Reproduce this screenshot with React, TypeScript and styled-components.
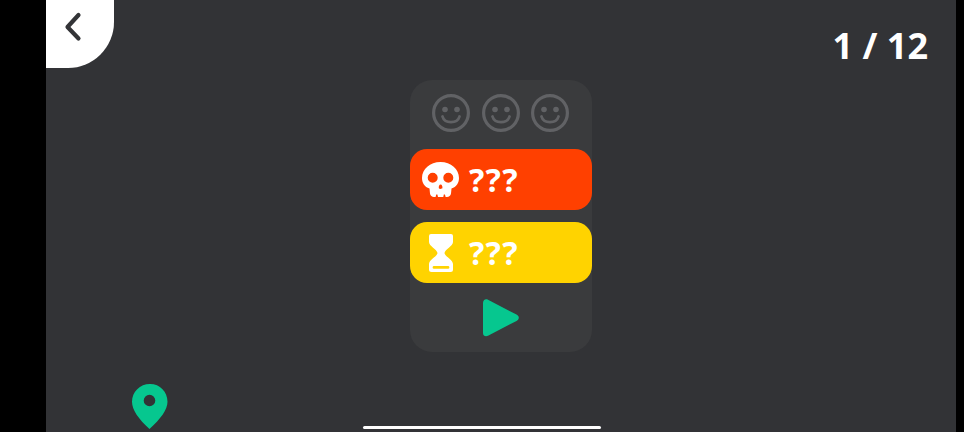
import React, { FC, ReactNode } from 'react'
import styled, { createGlobalStyle } from 'styled-components'

const GlobalStyle = createGlobalStyle`
  html, body {
    margin: 0;
    padding: 0;
    background: #000;
    font-family: "Noto Sans", "Open Sans", sans-serif;
  }
`

const Frame = styled.div`
  width: 964px;
  height: 432px;
  overflow: hidden;
  background: #000;
  display: flex;
  justify-content: flex-start;
  padding-left: 46px;
  box-sizing: border-box;
`

const Screen = styled.main`
  position: relative;
  width: 910px;
  height: 432px;
  background: #323336;
  display: flex;
  justify-content: center;
  align-items: flex-start;
  padding-top: 80px;
  box-sizing: border-box;
`

const BackButton = styled.button`
  position: absolute;
  left: 0;
  top: 0;
  width: 68px;
  height: 68px;
  padding: 0 15px 14px 0;
  border: 0;
  background: #fff;
  border-bottom-right-radius: 46px;
  display: flex;
  align-items: center;
  justify-content: center;
`

const Counter = styled.div`
  position: absolute;
  right: 28px;
  top: 22px;
  color: #fff;
  font-size: 36px;
  line-height: 48px;
  font-weight: 700;
  white-space: pre;
`

const Card = styled.section`
  width: 182px;
  height: 272px;
  background: #3a3b3d;
  border-radius: 22px;
  display: flex;
  flex-direction: column;
`

const Faces = styled.div`
  height: 66px;
  padding: 0 1px 3px 0;
  display: flex;
  align-items: center;
  justify-content: center;
  gap: 11.5px;
`

const Row = styled.div<{ $color: string }>`
  height: 61px;
  background: ${p => p.$color};
  border-radius: 17px;
  display: flex;
  align-items: center;
  padding-left: 12px;
  gap: 10px;
  color: #fff;
  font-size: 32px;
  font-weight: 700;
  letter-spacing: 1.3px;
`

const RowGap = styled.div`
  height: 12px;
`

const PlayRow = styled.div`
  height: 68px;
  padding-top: 1px;
  display: flex;
  align-items: center;
  justify-content: center;
`

const IconSlot = styled.span`
  width: 37px;
  display: flex;
  justify-content: center;
`

const Pin = styled.svg`
  position: absolute;
  left: 86px;
  top: 384px;
`

const HomeBar = styled.div`
  position: absolute;
  left: 317px;
  bottom: 3px;
  width: 238px;
  height: 3px;
  border-radius: 2px;
  background: #fff;
`

const Face: FC = () => (
  <svg width="38" height="38" viewBox="0 0 38 38" fill="none">
    <circle cx="19" cy="19" r="17.4" stroke="#616265" strokeWidth="3.2" />
    <circle cx="13" cy="15.5" r="2.8" fill="#616265" />
    <circle cx="25" cy="15.5" r="2.8" fill="#616265" />
    <path d="M10.5 22.5 C12.5 30 25.5 30 27.5 22.5" stroke="#616265" strokeWidth="2.8" strokeLinecap="round" />
  </svg>
)

const Skull: FC = () => (
  <svg width="37" height="35" viewBox="0 0 37 35">
    <path
      fill="#fff"
      fillRule="evenodd"
      d="M18.5 0 C29 0 37 7 37 16 C37 21 34.5 25 29.5 26.5 L29 31.5 C28.7 33.8 27 35 25 35 L23.6 35 L23 32.5 L21.8 32.5 L21.3 35 L16 35 L15.4 32.5 L14.2 32.5 L13.6 35 L12 35 C10 35 8.3 33.8 8 31.5 L7.5 26.5 C2.5 25 0 21 0 16 C0 7 8 0 18.5 0 Z
         M10.7 10.7 A5 5 0 1 0 10.7 20.7 A5 5 0 1 0 10.7 10.7 Z
         M26.3 10.7 A5 5 0 1 0 26.3 20.7 A5 5 0 1 0 26.3 10.7 Z
         M18.6 22.5 C17.2 22.5 16.6 24.5 16.8 26 C17 27.2 20.2 27.2 20.4 26 C20.6 24.5 20 22.5 18.6 22.5 Z"
    />
  </svg>
)

const Hourglass: FC = () => (
  <svg width="24" height="38" viewBox="0 0 24 38">
    <path
      fill="#fff"
      fillRule="evenodd"
      d="M2 0 H22 A2 2 0 0 1 24 2 V8 C24 12 16 15.5 15.5 19 C16 22.5 24 26 24 30 V35.5 A2.5 2.5 0 0 1 21.5 38 H2.5 A2.5 2.5 0 0 1 0 35.5 V30 C0 26 8 22.5 8.5 19 C8 15.5 0 12 0 8 V2 A2 2 0 0 1 2 0 Z
         M5 32 A1.4 1.4 0 0 0 5 34.8 H19 A1.4 1.4 0 0 0 19 32 Z"
    />
  </svg>
)

const Play: FC = () => (
  <svg width="38" height="38" viewBox="0 0 38 38">
    <path
      fill="#06c78f"
      d="M1 4 C1 1 3.5 -0.5 6 0.8 L34.5 15.6 C37.6 17.2 37.6 20.3 34.5 21.9 L6 36.8 C3.5 38 1 36.8 1 34 Z"
    />
  </svg>
)

const StatRow: FC<{ color: string; icon: ReactNode }> = props => (
  <Row $color={props.color}>
    <IconSlot>{props.icon}</IconSlot>
    <span>???</span>
  </Row>
)

export default function App() {
  return (
    <>
      <GlobalStyle />
      <Frame>
        <Screen>
          <BackButton aria-label="back">
            <svg width="18" height="30" viewBox="0 0 18 30" fill="none">
              <path d="M14.5 3 L3.5 15 L14.5 26.5" stroke="#333437" strokeWidth="4.2" strokeLinecap="round" strokeLinejoin="round" />
            </svg>
          </BackButton>
          <Counter>1 / 12</Counter>
          <Card>
            <Faces>
              <Face />
              <Face />
              <Face />
            </Faces>
            <StatRow color="#ff4000" icon={<Skull />} />
            <RowGap />
            <StatRow color="#ffd300" icon={<Hourglass />} />
            <PlayRow>
              <Play />
            </PlayRow>
          </Card>
          <Pin width="36" height="45" viewBox="0 0 36 45">
            <path
              fill="#06c78f"
              fillRule="evenodd"
              d="M18 0 C28 0 35.5 7.8 35.5 17.8 C35.5 26 28.5 35 17.5 45 C6.5 35 0 26 0 17.8 C0 7.8 8 0 18 0 Z M17.5 10.7 A5.8 5.8 0 1 0 17.5 22.3 A5.8 5.8 0 1 0 17.5 10.7 Z"
            />
          </Pin>
          <HomeBar />
        </Screen>
      </Frame>
    </>
  )
}
